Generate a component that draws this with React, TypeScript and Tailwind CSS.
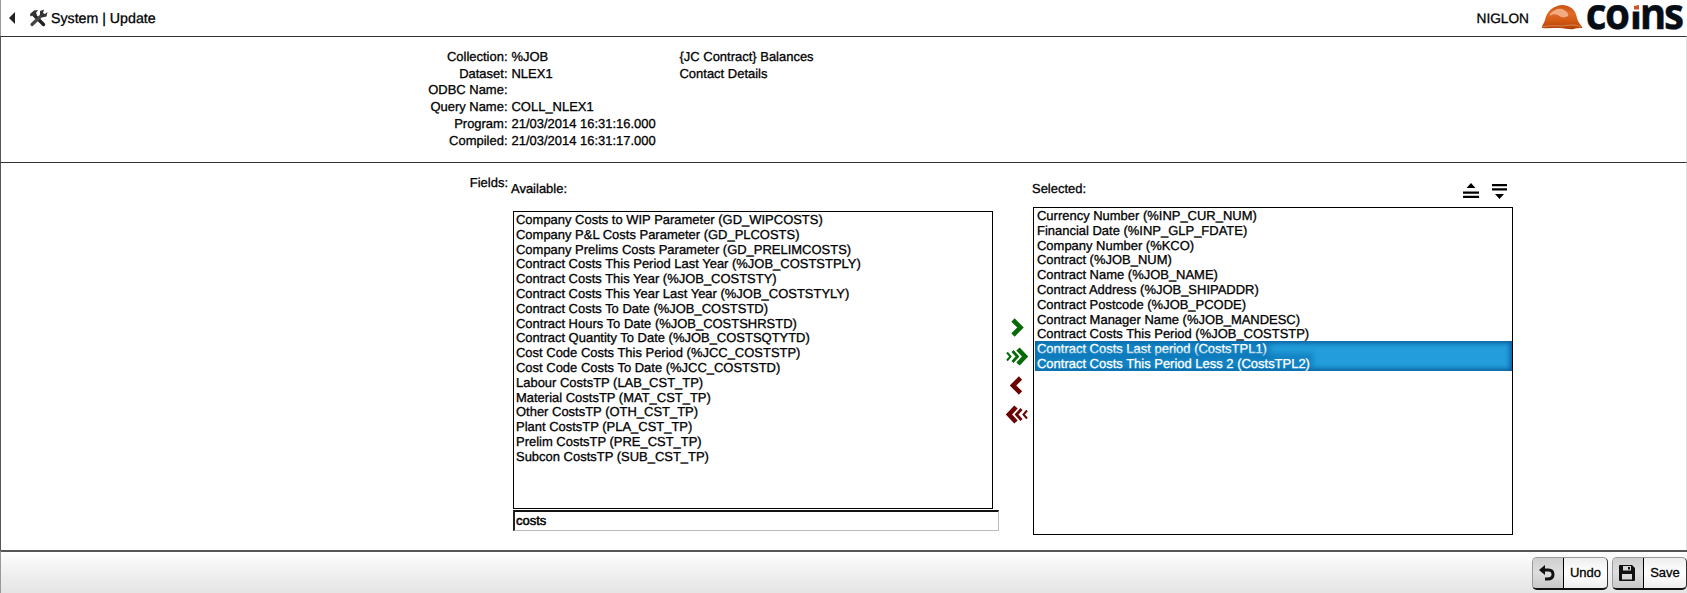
import type { ReactNode } from "react";

const details: [string, string, string, string][] = [
  ["Collection:", "%JOB", "{JC Contract} Balances", "h-[17px]"],
  ["Dataset:", "NLEX1", "Contact Details", "h-[17px]"],
  ["ODBC Name:", "", "", "h-[16px]"],
  ["Query Name:", "COLL_NLEX1", "", "h-[17px]"],
  ["Program:", "21/03/2014 16:31:16.000", "", "h-[17px]"],
  ["Compiled:", "21/03/2014 16:31:17.000", "", "h-[17px]"],
];

const available = [
  "Company Costs to WIP Parameter (GD_WIPCOSTS)",
  "Company P&L Costs Parameter (GD_PLCOSTS)",
  "Company Prelims Costs Parameter (GD_PRELIMCOSTS)",
  "Contract Costs This Period Last Year (%JOB_COSTSTPLY)",
  "Contract Costs This Year (%JOB_COSTSTY)",
  "Contract Costs This Year Last Year (%JOB_COSTSTYLY)",
  "Contract Costs To Date (%JOB_COSTSTD)",
  "Contract Hours To Date (%JOB_COSTSHRSTD)",
  "Contract Quantity To Date (%JOB_COSTSQTYTD)",
  "Cost Code Costs This Period (%JCC_COSTSTP)",
  "Cost Code Costs To Date (%JCC_COSTSTD)",
  "Labour CostsTP (LAB_CST_TP)",
  "Material CostsTP (MAT_CST_TP)",
  "Other CostsTP (OTH_CST_TP)",
  "Plant CostsTP (PLA_CST_TP)",
  "Prelim CostsTP (PRE_CST_TP)",
  "Subcon CostsTP (SUB_CST_TP)",
];

const selected = [
  "Currency Number (%INP_CUR_NUM)",
  "Financial Date (%INP_GLP_FDATE)",
  "Company Number (%KCO)",
  "Contract (%JOB_NUM)",
  "Contract Name (%JOB_NAME)",
  "Contract Address (%JOB_SHIPADDR)",
  "Contract Postcode (%JOB_PCODE)",
  "Contract Manager Name (%JOB_MANDESC)",
  "Contract Costs This Period (%JOB_COSTSTP)",
];

const highlighted = [
  "Contract Costs Last period (CostsTPL1)",
  "Contract Costs This Period Less 2 (CostsTPL2)",
];

function Row({ children }: { children: ReactNode }) {
  return <li className="h-[14.8px] whitespace-nowrap leading-[15px]">{children}</li>;
}

function Logo() {
  return (
    <svg className="block overflow-visible" width="142" height="28" viewBox="0 0 142 28">
      <defs>
        <linearGradient id="shell" x1="0" y1="0" x2="0" y2="1">
          <stop offset="0" stopColor="#c9530f" />
          <stop offset="0.35" stopColor="#e06a28" />
          <stop offset="0.65" stopColor="#d45a14" />
          <stop offset="1" stopColor="#ad3f05" />
        </linearGradient>
      </defs>
      <path d="M1.800 23C3 20 4 19 5 16C7 7 13 2 22 1C30 1 36 6 37 14C38 18 40 20 42.500 23.500C42 24.500 37 23.500 34 25C29 26 25 24 20 24C14 24 8 24.500 1.800 24Z" fill="url(#shell)" />
      <path d="M10 10C13 6 18 4 22 5C27 7 29 10 28 12C25 14 21 14 18 11C15 10 12 10 10 12Z" fill="#f5b28d" opacity="0.9" />
      <path d="M2 23C11 21 16 22 22 22C29 21 35 20 41 23" fill="none" stroke="#e9935f" strokeWidth="0.8" />
      <text x="48.7 69.2 95.6 106 132" y="24.500" transform="scale(.94 1)" fontFamily="Open Sans" fontWeight="700" fontSize="43" fill="#060d14" stroke="#060d14" strokeWidth="0.4">coıns</text>
      <path d="M92 -1H101V7.500H92Z" fill="white" />
      <path d="M94 2 99 1V5.500H94Z" fill="#c9562a" />
    </svg>
  );
}

function ActionButton({ label, icon, width }: { label: string; icon: ReactNode; width: string }) {
  return (
    <button className={`flex h-[33px] overflow-hidden rounded-[5px] border border-b-2 border-[#999] border-r-[#333] border-b-[#111] bg-linear-to-b from-[#eee] via-white to-[#eee] ${width}`}>
      <span className="flex h-full w-[31px] shrink-0 items-center justify-center border-r border-black bg-linear-to-b from-[#cfcfcf] via-[#dedede] to-[#c8c8c8] pr-[2px]">{icon}</span>
      <span className="flex h-full flex-1 items-center justify-center pb-[1px] text-[13px]">{label}</span>
    </button>
  );
}

export default function App() {
  return (
    <div className="flex h-[593px] w-[1687px] flex-col overflow-hidden bg-white font-['Liberation_Sans',Arial,sans-serif] text-[12.97px] text-black [-webkit-text-stroke:0.3px] [text-rendering:geometricPrecision]">
      <header className="flex h-[36px] shrink-0 items-center border-l border-[#999] pl-[8px]">
        <svg width="7" height="12" viewBox="0 0 7 12"><path d="M0 6 6 0V12Z" fill="#222" /></svg>
        <svg className="ml-[13px]" width="19" height="18" viewBox="0 0 19 18">
          <path d="M5 6 14.500 15.500" stroke="#222" strokeWidth="3.400" strokeLinecap="round" />
          <path d="M3 15.500 13 6" stroke="#444" strokeWidth="3.200" strokeLinecap="round" />
          <path d="M1 5 5 1.500 9 1 7 4 8 6 5 8 3.500 6.500 1.500 7.500Z" fill="#333" />
          <path d="M11 6V2L15 .500 14 4 16 5 18.500 3 17.500 7.500 13 8.500Z" fill="#333" />
        </svg>
        <h1 className="ml-[3px] pt-[3px] text-[14.2px]">System | Update</h1>
        <span className="ml-auto pt-[2px] text-[13.700px]">NIGLON</span>
        <div className="ml-[11px] mr-[5px] [-webkit-text-stroke:0px]"><Logo /></div>
      </header>

      <section className="h-[126px] shrink-0 border-x border-t border-[#333] border-l-[#555] border-r-[#ddd] pt-[11px]">
        {details.map(([name, value, note, height]) => (
          <div key={name} className={`flex items-center whitespace-nowrap ${height}`}>
            <span className="w-[506.5px] text-right">{name}</span>
            <span className="ml-[4px] w-[168px]">{value}</span>
            <span>{note}</span>
          </div>
        ))}
      </section>

      <main className="flex h-[388px] shrink-0 items-start border-x border-t border-[#333] border-l-[#555] border-r-[#ddd]">
        <div className="w-[507px] pt-[10px] text-right">Fields:</div>
        <div className="ml-[3px] w-[488px]">
          <div className="h-[48px] pt-[17px] leading-[18px]">Available:</div>
          <ul className="ml-[2px] h-[298px] w-[480px] border border-black pl-[2px]">
            {available.map((field) => <Row key={field}>{field}</Row>)}
          </ul>
          <input className="ml-[2px] mt-[1px] block h-[21px] w-[486px] border border-l-2 border-t-2 border-[#bbb] border-l-[#222] border-t-[#111] pb-[1px] pl-[1px] text-[13px] outline-none [-webkit-text-stroke:0.5px]" defaultValue="costs" />
        </div>
        <div className="flex w-[34px] flex-col items-center gap-[10px] pl-[2px] pt-[155px]">
          <svg width="22" height="19" viewBox="0 0 22 19" fill="none" stroke="#066a06"><path d="M7 2 14.500 9.500 7 17" strokeWidth="4.600" /></svg>
          <svg width="22" height="19" viewBox="0 0 22 19" fill="none" stroke="#066a06"><path d="M12 2 19 9.500 12 17" strokeWidth="4.600" /><path d="M6.500 4 11.500 9.500 6.500 15" strokeWidth="2.800" /><path d="M1 5.500 4.500 9.500 1 13.500" strokeWidth="2" /></svg>
          <svg width="22" height="19" viewBox="0 0 22 19" fill="none" stroke="#6c0303"><path d="M14.500 2 7 9.500 14.500 17" strokeWidth="4.600" /></svg>
          <svg width="22" height="19" viewBox="0 0 22 19" fill="none" stroke="#6c0303"><path d="M10 2 3 9.500 10 17" strokeWidth="4.600" /><path d="M15.500 4 10.500 9.500 15.500 15" strokeWidth="2.800" /><path d="M21 5.500 17.500 9.500 21 13.500" strokeWidth="2" /></svg>
        </div>
        <div className="w-[481px]">
          <div className="flex h-[44px] pt-[17px] leading-[18px]">
            <span className="-ml-[1px]">Selected:</span>
            <svg className="ml-auto mt-[3px]" width="16" height="15" viewBox="0 0 16 15"><path d="M8 0 12.500 5H3.500ZM0 8.500H16V10.800H0ZM0 12.700H16V15H0Z" /></svg>
            <svg className="ml-[13px] mr-[7px] mt-[4px]" width="15" height="15" viewBox="0 0 15 15"><path d="M0 0H15V2.300H0ZM0 4.300H15V6.600H0ZM3 10H12L7.500 15Z" /></svg>
          </div>
          <div className="h-[328px] w-[480px] border border-black">
            <ul className="pl-[3px]">{selected.map((field) => <Row key={field}>{field}</Row>)}</ul>
            <ul className="ml-[1px] overflow-hidden bg-[#239ddb] text-white shadow-[inset_0_0_5px_2px_#075b98]">
              {highlighted.map((field) => <li key={field} className="h-[15px] whitespace-nowrap pl-[2px] leading-[15px]">
                <span className="inline-block h-[15px] bg-[#0873b4]/60 shadow-[0_0_5px_3px_#0873b499]">{field}</span>
              </li>)}
            </ul>
          </div>
        </div>
      </main>

      <footer className="flex h-[43px] shrink-0 justify-end gap-[4px] border-l border-t-2 border-[#555] border-l-[#999] bg-linear-to-b from-white via-[#f8f8f8] via-20% to-[#e4e4e4] pt-[5px]">
        <ActionButton label="Undo" width="w-[76px]" icon={
          <svg width="16" height="16" viewBox="0 0 16 16"><path d="M4 5H9.500Q14 5 14 9.500T8.500 14H6" fill="none" stroke="#111" strokeWidth="3" /><path d="M0 5 6 0V10Z" fill="#111" /></svg>
        } />
        <ActionButton label="Save" width="w-[75px]" icon={
          <svg width="16" height="16" viewBox="0 0 16 16"><path fillRule="evenodd" d="M1 0H13L16 3V15Q16 16 15 16H1Q0 16 0 15V1Q0 0 1 0ZM4 1V5.500H12V1ZM9 2H11V4.500H9ZM3 9V14.500H13V9Z" fill="#111" /></svg>
        } />
      </footer>
    </div>
  );
}
